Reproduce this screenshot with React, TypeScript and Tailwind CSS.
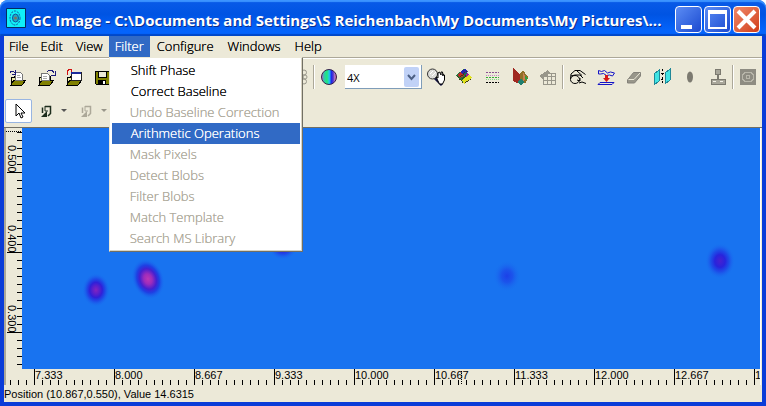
import { ReactNode } from 'react';
import clsx from 'clsx';

type MenuEntry = { title: string; enabled: boolean; active?: boolean };
type Blob = { x: number; y: number; rx: number; ry: number; tilt: number; fill: string };

const filterMenu: MenuEntry[] = [
  { title: 'Shift Phase', enabled: true },
  { title: 'Correct Baseline', enabled: true },
  { title: 'Undo Baseline Correction', enabled: false },
  { title: 'Arithmetic Operations', enabled: true, active: true },
  { title: 'Mask Pixels', enabled: false },
  { title: 'Detect Blobs', enabled: false },
  { title: 'Filter Blobs', enabled: false },
  { title: 'Match Template', enabled: false },
  { title: 'Search MS Library', enabled: false },
];

const blobs: Blob[] = [
  { x: 74, y: 162, rx: 14, ry: 17, tilt: 0, fill: 'url(#violet)' },
  { x: 126, y: 151, rx: 16, ry: 21, tilt: -20, fill: 'url(#pink)' },
  { x: 261, y: 118, rx: 15, ry: 14, tilt: 0, fill: 'url(#deep)' },
  { x: 485, y: 148, rx: 14, ry: 16, tilt: 0, fill: 'url(#faint)' },
  { x: 698, y: 133, rx: 15, ry: 18, tilt: 0, fill: 'url(#deep)' },
];

const timeLabels = ['7.333', '8.000', '8.667', '9.333', '10.000', '10.667', '11.333', '12.000', '12.667', '1'];
const secondLabels = ['0.500', '0.400', '0.300'];

function Icon({ children }: { children: ReactNode }) {
  return (
    <svg className="h-5 w-5" viewBox="0 0 20 20" fill="none" shapeRendering="crispEdges" aria-hidden="true">
      {children}
    </svg>
  );
}

function ToolButton({ label, children }: { label: string; children?: ReactNode }) {
  return (
    <button type="button" aria-label={label} className="flex h-6 w-7 shrink-0 items-center justify-center">
      {children}
    </button>
  );
}

function Separator() {
  return <div className="h-6 w-[2px] shrink-0 border-l border-[#aca899] bg-white" />;
}

function FolderShape() {
  return (
    <>
      <path d="M3 17V10h3v-1h8v5" fill="#ece9a8" stroke="#000" />
      <path d="M3 18L6 13h12l-4 5z" fill="#808000" stroke="#000" />
    </>
  );
}

function OpenIcon() {
  return (
    <Icon>
      <FolderShape />
      <path d="M7 5h5l2 2v6H7z" fill="#fff" stroke="#777" />
      <path d="M9 8h3M9 10h4" stroke="#aaa" />
      <path d="M2 6V4h3l2 2M7 3v4H4" stroke="#1c1c7c" />
    </Icon>
  );
}

function SaveAsIcon() {
  return (
    <Icon>
      <FolderShape />
      <path d="M5 6h6l2 2v5H5z" fill="#fff" stroke="#777" />
      <path d="M7 9h4M7 11h4" stroke="#aaa" />
      <path d="M11 5l2-2h3l2 3M19 4v4h-4" stroke="#1c1c7c" />
    </Icon>
  );
}

function ImportIcon() {
  return (
    <Icon>
      <FolderShape />
      <path d="M7 5h10v8H7z" fill="#fff" stroke="#222" />
      <path d="M7 6h10" stroke="#1c2c9c" strokeWidth="2" />
      <path d="M3 8V4l3-2M4 2h3v3" stroke="#d01010" />
    </Icon>
  );
}

function SaveIcon() {
  return (
    <Icon>
      <path d="M3 4h14v13H4l-1-1z" fill="#808000" stroke="#000" />
      <path d="M6 4h8v6H6z" fill="#ece9d8" stroke="#000" />
      <path d="M6 13h8v4H6z" fill="#000" />
      <path d="M11 14h2v3h-2z" fill="#fff" />
    </Icon>
  );
}

function LoopsIcon() {
  return (
    <svg className="h-5 w-5" viewBox="0 0 20 20" fill="none" aria-hidden="true">
      <circle cx="15" cy="5.500" r="2.500" stroke="#98968a" />
      <circle cx="16" cy="10" r="2" stroke="#98968a" />
      <circle cx="15" cy="14.500" r="2.500" stroke="#98968a" />
    </svg>
  );
}

function ColorWheelIcon() {
  return (
    <svg className="h-5 w-5" viewBox="0 0 20 20" aria-hidden="true">
      <defs>
        <linearGradient id="wheel">
          <stop offset="0" stopColor="#c060c8" />
          <stop offset="0.18" stopColor="#30c8b0" />
          <stop offset="0.36" stopColor="#22e878" />
          <stop offset="0.52" stopColor="#20c8f0" />
          <stop offset="0.66" stopColor="#1c28e8" />
          <stop offset="0.78" stopColor="#5838c8" />
          <stop offset="0.9" stopColor="#c080d0" />
          <stop offset="1" stopColor="#c04040" />
        </linearGradient>
      </defs>
      <circle cx="10" cy="10" r="7.500" fill="url(#wheel)" stroke="#38204c" />
    </svg>
  );
}

function PanZoomIcon() {
  return (
    <svg className="h-5 w-5" viewBox="0 0 20 20" fill="none" aria-hidden="true">
      <path d="M8 10l8 8" stroke="#101040" strokeWidth="3" />
      <circle cx="6.500" cy="7" r="5" fill="#dcdcd8" stroke="#333" />
      <path d="M4 7l3-3M6 9l4-4" stroke="#fff" />
      <path d="M10 10l2 1V6l1.500-1L15 8V5l1.500 0 .5 4V7l1.500 1v5l-2 4h-3z" fill="#fff" stroke="#000" />
    </svg>
  );
}

function SurfaceIcon() {
  return (
    <Icon>
      <path d="M2 8l8-6 8 9-8 6z" fill="#207a40" />
      <path d="M6 5l5-3 3 3-5 3z" fill="#2424b0" />
      <path d="M3 8l4-3 3 4-4 2z" fill="#c02828" />
      <path d="M8 13l7-5 3 3-8 6z" fill="#e0e020" />
      <path d="M11 8l3-2 1 2-3 2z" fill="#9a20a0" />
      <path d="M3 9l7 8 8-6M8 12l6-5M6 10l7-6" stroke="#444010" strokeDasharray="1 1" />
    </Icon>
  );
}

function LinesIcon() {
  return (
    <Icon>
      <path d="M4 5.500h13" stroke="#8a5090" strokeDasharray="2 1" />
      <path d="M4 8.500h13" stroke="#c888c8" strokeDasharray="1 1" />
      <path d="M4 10.500h13" stroke="#30b030" strokeDasharray="2 1" />
      <path d="M4 12.500h13" stroke="#88d888" strokeDasharray="1 1" />
      <path d="M4 15.500h13" stroke="#000" strokeDasharray="2 1" />
    </Icon>
  );
}

function PeaksIcon() {
  return (
    <Icon>
      <path d="M3 1l7 6v10l-7-3z" fill="#a02820" />
      <path d="M10 7l3-4 5 7-2 6-6 1z" fill="#907028" />
      <path d="M13 5l3 6-3 5z" fill="#c88050" />
      <path d="M7 15l4-4 3 4-3 3z" fill="#208070" />
      <path d="M15 9l3 2-2 3z" fill="#30a040" />
    </Icon>
  );
}

function TableIcon() {
  return (
    <Icon>
      <path d="M5 6h12v11H5z" fill="#ece9d8" stroke="#98968a" />
      <path d="M5 9h12M5 13h12M9 6v11M13 6v11" stroke="#98968a" />
      <path d="M1 9l9-6 2 3-8 6z" fill="#98968a" />
    </Icon>
  );
}

function HandIcon() {
  return (
    <svg className="h-5 w-5" viewBox="0 0 20 20" fill="none" aria-hidden="true">
      <ellipse cx="7" cy="12.500" rx="4.500" ry="4" stroke="#000" />
      <path d="M2.500 12L3 7l4-3.500h5l5.500 4M3 9l4-1h5l3 3M9 4l5 4.500M12 11v3l-3-1M11 16l3-1 4 1.500" stroke="#000" />
    </svg>
  );
}

function BaselineIcon() {
  return (
    <svg className="h-5 w-5" viewBox="0 0 20 20" fill="none" aria-hidden="true">
      <path d="M2.500 7V3.500l3 1 3-1 3 2.500 3-1 4 1-2 3-3-1-3 .5-3-2-3 .5z" stroke="#1414c8" />
      <path d="M9 8h3v3h2l-3.500 4L7 11h2z" fill="#d81818" />
      <path d="M4 15.500h14l-2 2H2z" stroke="#1414c8" />
    </svg>
  );
}

function EraserIcon() {
  return (
    <svg className="h-5 w-5" viewBox="0 0 20 20" fill="none" aria-hidden="true">
      <path d="M3.500 13l6-7.500h7v3.500l-6 7h-7z" fill="#98968a" stroke="#84827a" />
      <path d="M4.500 12.500h5.500l6-6.500" stroke="#ece9d8" />
    </svg>
  );
}

function FlipIcon() {
  return (
    <Icon>
      <path d="M2 7l5-4v11l-5 4z" fill="#40e4e4" stroke="#208898" />
      <path d="M13 6l5-4v11l-5 4z" fill="#40e4e4" stroke="#208898" />
      <path d="M10 2v16" stroke="#000" strokeDasharray="2 2" />
      <path d="M9 6h3M9 12h2" stroke="#000" />
    </Icon>
  );
}

function StampIcon() {
  return (
    <Icon>
      <circle cx="10" cy="5" r="3" fill="#a8a69a" stroke="#7c7a70" />
      <path d="M9 8h2v4H9z" fill="#7c7a70" />
      <path d="M3 12h14v5H3z" fill="#a8a69a" stroke="#7c7a70" />
      <path d="M5 14h3M12 14h3" stroke="#f4f2e8" />
    </Icon>
  );
}

function TargetIcon() {
  return (
    <Icon>
      <path d="M2 2h16v16H2z" fill="#8e8c82" />
      <ellipse cx="10" cy="10" rx="6" ry="5" stroke="#b8b6aa" />
      <circle cx="10" cy="10" r="2" stroke="#b8b6aa" />
    </Icon>
  );
}

function TurnIcon({ color }: { color: string }) {
  return (
    <svg className="h-5 w-5" viewBox="0 0 20 20" fill="none" aria-hidden="true">
      <path d="M6.500 12V6.500M9 5.500h5.500v7L12 15" stroke={color} strokeWidth="1.500" />
      <path d="M9 5v5h3" stroke={color} />
      <path d="M5 16h6v-6z" fill={color} />
    </svg>
  );
}

function DropArrow({ color }: { color: string }) {
  return (
    <svg className="h-1 w-2 shrink-0" viewBox="0 0 8 4" aria-hidden="true">
      <path d="M1 0h6L4 3z" fill={color} />
    </svg>
  );
}

function TitleBar() {
  return (
    <header className="flex h-9 items-center gap-[5px] rounded-t-lg bg-linear-to-b from-[#0a5be8] from-0% via-[#0054e3] via-40% to-[#0464fc] to-85% px-[6px] shadow-[inset_0_2px_1px_#3c94ff,inset_0_-2px_1px_#0048c8]">
      <svg className="h-5 w-5 shrink-0" viewBox="0 0 20 20" aria-hidden="true">
        <path d="M.5 .5h19v19H.5z" fill="#10f0f8" stroke="#042c60" />
        <ellipse cx="9" cy="10" rx="5" ry="7" fill="none" stroke="#1050a0" strokeDasharray="2 1" />
        <ellipse cx="9.500" cy="10" rx="3" ry="4" fill="#20a8c0" stroke="#1050a0" />
        <circle cx="9.500" cy="10" r="1.500" fill="#807060" />
      </svg>
      <h1 className="min-w-0 flex-1 overflow-hidden pt-[3px] font-['Open_Sans','Noto_Sans',sans-serif] text-[15px] leading-6 font-bold whitespace-nowrap text-white [text-shadow:1px_1px_0_#0a2c8c]">
        GC Image - C:\Documents and Settings\S Reichenbach\My Documents\My Pictures\...
      </h1>
      <div className="flex shrink-0 gap-[2px] pt-[3px]">
        <button type="button" aria-label="Minimize" className="flex h-[27px] w-[27px] rounded-sm border border-white bg-linear-to-br from-[#5c8cf4] to-[#1c48d0]">
          <svg viewBox="0 0 25 25" aria-hidden="true">
            <path d="M5 18h11v4H5z" fill="#fff" />
          </svg>
        </button>
        <button type="button" aria-label="Maximize" className="flex h-[27px] w-[27px] rounded-sm border border-white bg-linear-to-br from-[#5c8cf4] to-[#1c48d0]">
          <svg viewBox="0 0 25 25" aria-hidden="true">
            <path d="M3 3h19v19H3zM5 7v13h15V7z" fill="#fff" fillRule="evenodd" />
          </svg>
        </button>
        <button type="button" aria-label="Close" className="flex h-[27px] w-[27px] rounded-sm border border-white bg-linear-to-br from-[#f08868] to-[#d03c14]">
          <svg viewBox="0 0 25 25" aria-hidden="true">
            <path d="M4 4l17 17M21 4L4 21" stroke="#fff" strokeWidth="4" />
          </svg>
        </button>
      </div>
    </header>
  );
}

function FilterMenu() {
  return (
    <ul className="absolute top-full left-0 z-10 w-[194px] border border-t-[#ece9d8] border-r-[#716f64] border-b-[#716f64] border-l-[#ece9d8] bg-white p-[2px] shadow-[inset_-1px_-1px_0_#d8d4c4]">
      {filterMenu.map((item) => (
        <li key={item.title}>
          <button
            type="button"
            disabled={!item.enabled}
            className={clsx(
              'block h-[21px] w-full text-left whitespace-nowrap',
              item.enabled ? 'pl-[19px]' : 'pl-[18px] text-[#aca899]',
              item.active && 'bg-[#316ac5] text-white'
            )}
          >
            {item.title}
          </button>
        </li>
      ))}
    </ul>
  );
}

function MenuBar() {
  return (
    <nav className="flex h-[22px] border-b border-[#aca899] font-['Open_Sans','Noto_Sans',sans-serif] text-[13px] leading-[21px] font-light [&_button]:[text-shadow:0_0_0_currentColor]">
      <button type="button" className="pr-[6px] pl-[5px]">File</button>
      <button type="button" className="px-[6px]">Edit</button>
      <button type="button" className="pr-[6px] pl-[7px]">View</button>
      <div className="relative">
        <button type="button" className="block h-[21px] bg-[#316ac5] px-[6px] text-white">Filter</button>
        <FilterMenu />
      </div>
      <button type="button" className="px-[7px]">Configure</button>
      <button type="button" className="px-[7px]">Windows</button>
      <button type="button" className="px-[7px]">Help</button>
    </nav>
  );
}

function Toolbar() {
  return (
    <div className="overflow-hidden border-t border-b border-t-white border-b-[#716f64]">
      <div className="flex h-[35px] items-center">
        <ToolButton label="Open"><OpenIcon /></ToolButton>
        <ToolButton label="Save as"><SaveAsIcon /></ToolButton>
        <ToolButton label="Import"><ImportIcon /></ToolButton>
        <ToolButton label="Save"><SaveIcon /></ToolButton>
        <div className="w-[169px] shrink-0" />
        <ToolButton label="Blobs"><LoopsIcon /></ToolButton>
        <Separator />
        <ToolButton label="Colors"><ColorWheelIcon /></ToolButton>
        <div className="relative ml-[2px] h-6 w-[77px] shrink-0 border-r border-b border-[#7f9db9] bg-white">
          <select aria-label="Zoom" defaultValue="4X" className="h-full w-full appearance-none bg-transparent pl-[2px] font-['Open_Sans','Noto_Sans',sans-serif] text-[11px] outline-none">
            <option>1X</option>
            <option>2X</option>
            <option>4X</option>
          </select>
          <svg className="pointer-events-none absolute top-[2px] right-[2px] h-5 w-[15px] rounded-xs bg-[#c1d2f7]" viewBox="0 0 15 20" fill="none" aria-hidden="true">
            <path d="M4 8l3.500 4L11 8" stroke="#4d6185" strokeWidth="2" />
          </svg>
        </div>
        <ToolButton label="Pan and zoom"><PanZoomIcon /></ToolButton>
        <ToolButton label="Surface"><SurfaceIcon /></ToolButton>
        <ToolButton label="Profiles"><LinesIcon /></ToolButton>
        <ToolButton label="3D view"><PeaksIcon /></ToolButton>
        <ToolButton label="Table"><TableIcon /></ToolButton>
        <Separator />
        <ToolButton label="Grab"><HandIcon /></ToolButton>
        <ToolButton label="Baseline"><BaselineIcon /></ToolButton>
        <ToolButton label="Erase"><EraserIcon /></ToolButton>
        <ToolButton label="Shift phase"><FlipIcon /></ToolButton>
        <ToolButton label="Detect">
          <svg className="h-5 w-5" viewBox="0 0 20 20" aria-hidden="true">
            <ellipse cx="10" cy="10" rx="3" ry="5.500" fill="#7c7a70" />
          </svg>
        </ToolButton>
        <ToolButton label="Template"><StampIcon /></ToolButton>
        <Separator />
        <ToolButton label="Search"><TargetIcon /></ToolButton>
      </div>
      <div className="flex h-[33px] items-center">
        <button type="button" aria-label="Select" className="ml-px flex h-6 w-[27px] items-center justify-center rounded-xs border border-[#98b5e2] bg-white">
          <svg className="h-4 w-4" viewBox="0 0 16 16" aria-hidden="true">
            <path d="M5 1v12l3-3 2 5 2-1-2-4h4z" fill="#fff" stroke="#000" />
          </svg>
        </button>
        <ToolButton label="Undo"><TurnIcon color="#1c2c1c" /></ToolButton>
        <DropArrow color="#555" />
        <div className="w-[4px]" />
        <ToolButton label="Redo"><TurnIcon color="#aca899" /></ToolButton>
        <DropArrow color="#98968a" />
      </div>
    </div>
  );
}

function SecondAxis() {
  return (
    <svg className="w-4 shrink-0" shapeRendering="crispEdges" aria-hidden="true">
      <path d="M0 3.500h16" stroke="#000" strokeDasharray="1 1" />
      {Array.from({ length: 30 }, (_, i) => (
        <path key={i} d={`M11 ${4.5 + i * 8}h5`} stroke="#000" />
      ))}
      {secondLabels.map((label, i) => (
        <g key={label}>
          <path d={`M1 ${44.5 + i * 80}h15`} stroke="#000" />
          <text transform={`translate(2 ${17 + i * 80}) rotate(90)`} fontSize="11">{label}</text>
        </g>
      ))}
    </svg>
  );
}

function TimeAxis() {
  return (
    <svg className="block h-4 w-full" shapeRendering="crispEdges" aria-hidden="true">
      {Array.from({ length: 94 }, (_, i) => (
        <path key={i} d={`M${4.5 + i * 8} 11v5`} stroke="#000" />
      ))}
      {timeLabels.map((label, i) => (
        <g key={label}>
          <path d={`M${28.5 + i * 80} 0v16`} stroke="#000" />
          <text x={29 + i * 80} y="10" fontSize="11">{label}</text>
        </g>
      ))}
      <path d="M455.500 2v14" stroke="#000" strokeDasharray="1 1" />
    </svg>
  );
}

function Chromatogram() {
  return (
    <svg className="min-w-0 flex-1 bg-[#1873f0]" role="img" aria-label="Chromatogram">
      <defs>
        <radialGradient id="pink">
          <stop offset="0" stopColor="#bc38b4" />
          <stop offset="0.25" stopColor="#9c2cbc" />
          <stop offset="0.5" stopColor="#4420d0" />
          <stop offset="0.68" stopColor="#2030e0" stopOpacity="0.75" />
          <stop offset="1" stopColor="#1873f0" stopOpacity="0" />
        </radialGradient>
        <radialGradient id="violet">
          <stop offset="0" stopColor="#8424c0" />
          <stop offset="0.25" stopColor="#5a20cc" />
          <stop offset="0.45" stopColor="#3020d8" />
          <stop offset="0.65" stopColor="#2038e4" stopOpacity="0.7" />
          <stop offset="1" stopColor="#1873f0" stopOpacity="0" />
        </radialGradient>
        <radialGradient id="deep">
          <stop offset="0" stopColor="#4820d0" />
          <stop offset="0.35" stopColor="#2824dc" />
          <stop offset="0.6" stopColor="#2038e4" stopOpacity="0.65" />
          <stop offset="1" stopColor="#1873f0" stopOpacity="0" />
        </radialGradient>
        <radialGradient id="faint">
          <stop offset="0" stopColor="#1c40e8" />
          <stop offset="0.4" stopColor="#1c4cea" stopOpacity="0.8" />
          <stop offset="1" stopColor="#1873f0" stopOpacity="0" />
        </radialGradient>
      </defs>
      {blobs.map((b) => (
        <ellipse key={b.x} cx={b.x} cy={b.y} rx={b.rx} ry={b.ry} fill={b.fill} transform={`rotate(${b.tilt} ${b.x} ${b.y})`} />
      ))}
    </svg>
  );
}

export default function App() {
  return (
    <div className="flex min-h-screen flex-col overflow-hidden bg-white font-['Liberation_Sans',Arial,sans-serif] text-black">
      <TitleBar />
      <div className="flex flex-1 flex-col border-r-4 border-b-4 border-l-4 border-[#0a3cd8] bg-[#ece9d8]">
        <MenuBar />
        <Toolbar />
        <main className="mr-px flex flex-1 flex-col border-r border-l-2 border-r-white border-l-[#aca899]">
          <div className="flex min-h-[200px] flex-1">
            <SecondAxis />
            <Chromatogram />
          </div>
          <TimeAxis />
        </main>
        <footer className="h-[17px] text-[11px] leading-[19px] whitespace-nowrap">
          Position (10.867,0.550), Value 14.6315
        </footer>
      </div>
    </div>
  );
}
